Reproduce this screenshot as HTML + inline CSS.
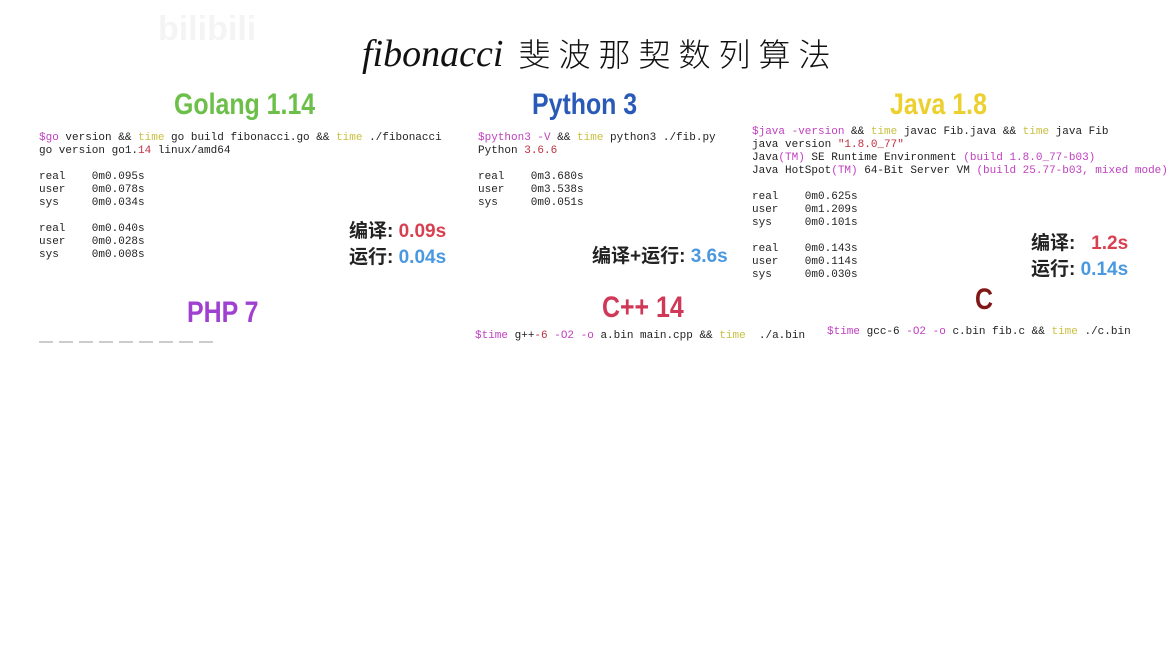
<!DOCTYPE html>
<html><head><meta charset="utf-8"><style>
body{margin:0;width:1167px;height:645px;background:#fff;position:relative;overflow:hidden;font-family:"Liberation Sans","Noto Sans CJK SC",sans-serif}
.a{position:absolute;white-space:pre}
.m{font-family:"Liberation Mono",monospace;font-size:11px;line-height:13px;color:#222}
.h{font-weight:bold;font-family:"Liberation Sans Narrow","Liberation Sans",sans-serif;font-size:30px;transform:scaleX(.83);transform-origin:left}
.p{color:#c040c0}.y{color:#c8c040}.r{color:#c03040}
.b{font-weight:bold;font-size:19px;color:#222}
</style></head><body>
<div class="a" style="left:158px;top:10px;font-size:34px;font-weight:bold;color:#f4f4f4">bilibili</div>
<div class="a" style="left:362px;top:30px;font-size:38px;color:#111"><i style="font-family:'Liberation Serif',serif">fibonacci</i><span style="font-family:'Noto Sans CJK SC',sans-serif;font-size:32px;letter-spacing:8px;font-weight:300"> 斐波那契数列算法</span></div>
<div class="a h" style="left:174px;top:88px;color:#6cc04a">Golang 1.14</div>
<div class="a h" style="left:532px;top:88px;color:#2a5ab8">Python 3</div>
<div class="a h" style="left:890px;top:88px;color:#ecd030">Java 1.8</div>
<div class="a h" style="left:187px;top:296px;color:#a040d0">PHP 7</div>
<div class="a h" style="left:602px;top:291px;color:#d03858">C++ 14</div>
<div class="a h" style="left:975px;top:283px;color:#801818">C</div>
<div class="a m" style="left:39px;top:132px"><span class="p">$go</span> version &amp;&amp; <span class="y">time</span> go build fibonacci.go &amp;&amp; <span class="y">time</span> ./fibonacci
go version go1.<span class="r">14</span> linux/amd64

real    0m0.095s
user    0m0.078s
sys     0m0.034s

real    0m0.040s
user    0m0.028s
sys     0m0.008s</div>
<div style="position:absolute;left:39px;top:341px;width:180px;height:2px;background:repeating-linear-gradient(90deg,#ccc 0 14px,#fff 14px 20px)"></div>
<div class="a m" style="left:478px;top:132px"><span class="p">$python3 -V</span> &amp;&amp; <span class="y">time</span> python3 ./fib.py
Python <span class="r">3.6.6</span>

real    0m3.680s
user    0m3.538s
sys     0m0.051s</div>
<div class="a m" style="left:752px;top:126px"><span class="p">$java -version</span> &amp;&amp; <span class="y">time</span> javac Fib.java &amp;&amp; <span class="y">time</span> java Fib
java version <span class="r">"1.8.0_77"</span>
Java<span class="p">(TM)</span> SE Runtime Environment <span class="p">(build 1.8.0_77-b03)</span>
Java HotSpot<span class="p">(TM)</span> 64-Bit Server VM <span class="p">(build 25.77-b03, mixed mode)</span>

real    0m0.625s
user    0m1.209s
sys     0m0.101s

real    0m0.143s
user    0m0.114s
sys     0m0.030s</div>
<div class="a m" style="left:475px;top:330px"><span class="p">$time</span> g++<span class="r">-6</span> <span class="p">-O2 -o</span> a.bin main.cpp &amp;&amp; <span class="y">time</span>  ./a.bin</div>
<div class="a m" style="left:827px;top:326px"><span class="p">$time</span> gcc-6 <span class="p">-O2 -o</span> c.bin fib.c &amp;&amp; <span class="y">time</span> ./c.bin</div>
<div class="a b" style="left:349px;top:216px">编译: <span style="color:#d84050">0.09s</span></div>
<div class="a b" style="left:349px;top:242px">运行: <span style="color:#4a98e0">0.04s</span></div>
<div class="a b" style="left:592px;top:241px">编译+运行: <span style="color:#4a98e0">3.6s</span></div>
<div class="a b" style="left:1031px;top:228px">编译:   <span style="color:#d84050">1.2s</span></div>
<div class="a b" style="left:1031px;top:254px">运行: <span style="color:#4a98e0">0.14s</span></div>
</body></html>
